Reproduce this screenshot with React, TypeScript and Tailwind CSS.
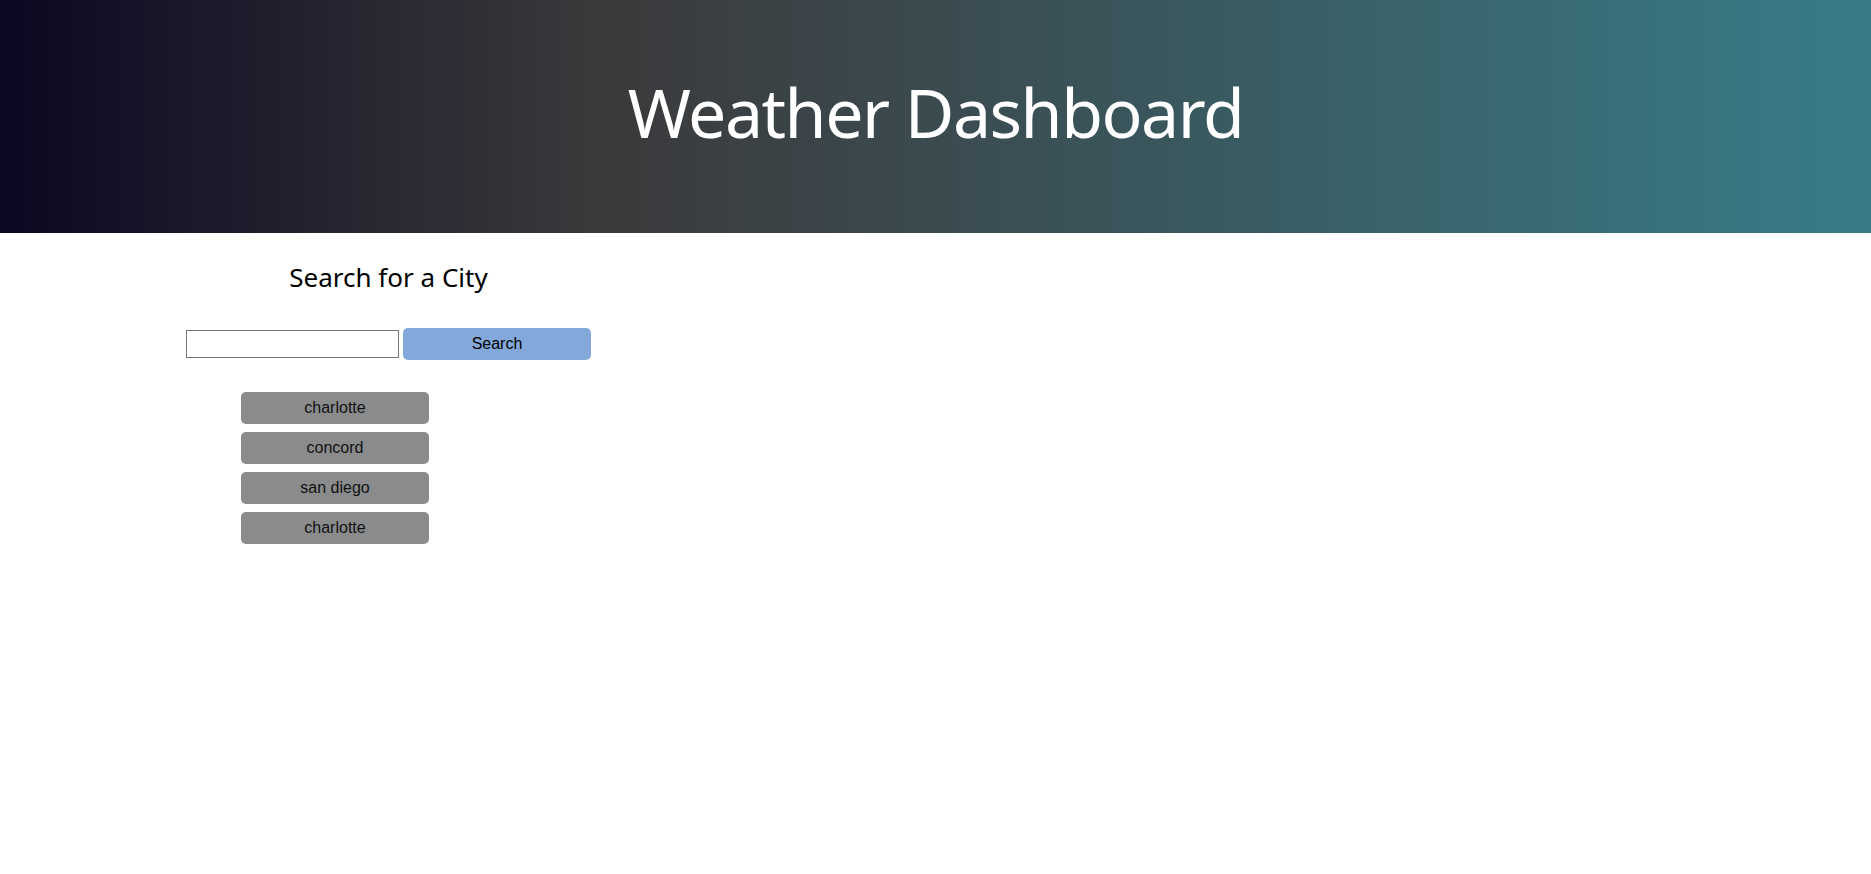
const cities = ["charlotte", "concord", "san diego", "charlotte"];

export default function App() {
  return (
    <div className="min-h-[874px] bg-white font-['Noto_Sans',sans-serif]">
      <header className="flex h-[233px] items-center justify-center bg-[linear-gradient(90deg,#0a0821_0%,#3b393b_32%,#387c88_100%)]">
        <h1 className="pb-[10px] text-[68px] leading-none text-white tracking-[-1.5px]">
          Weather Dashboard
        </h1>
      </header>

      <main className="flex">
        <section className="ml-[186px] flex w-[405px] flex-col">
          <h2 className="mt-[25px] text-center text-[26px] leading-[38px] text-black">
            Search for a City
          </h2>
          <div className="mt-[32px] flex items-center gap-[4px]">
            <input
              type="text"
              className="h-[28px] w-[213px] border border-[#767676] bg-white px-1 text-[16px]"
            />
            <button className="h-[32px] w-[188px] rounded-[5px] bg-[#82a9da] font-['Liberation_Sans',sans-serif] text-[16px] text-black">
              Search
            </button>
          </div>
          <ul className="ml-[55px] mt-[32px] flex flex-col gap-[8px]">
            {cities.map((city, i) => (
              <li key={i}>
                <button className="h-[32px] w-[188px] rounded-[5px] bg-[#8a8b8c] font-['Liberation_Sans',sans-serif] text-[16px] text-[#111]">
                  {city}
                </button>
              </li>
            ))}
          </ul>
        </section>
      </main>
    </div>
  );
}
